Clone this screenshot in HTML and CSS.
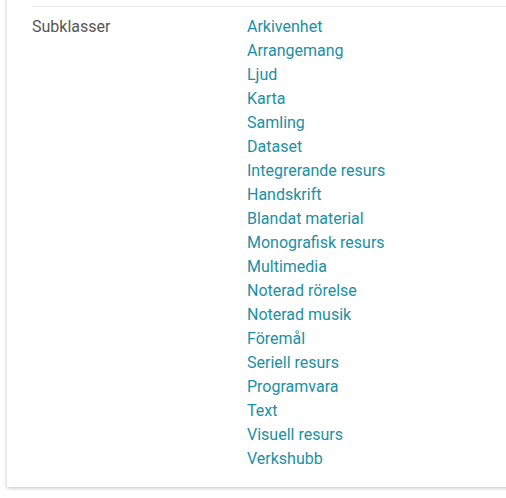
FILE: index.html
```html
<!DOCTYPE html>
<html>
<head>
<meta charset="utf-8">
<link rel="stylesheet" href="styles.css">
</head>
<body>
<div class="page">
<div class="card">
  <div class="row">
    <div class="label">Subklasser</div>
    <ul class="links">
      <li><a href="#">Arkivenhet</a></li>
      <li><a href="#">Arrangemang</a></li>
      <li><a href="#">Ljud</a></li>
      <li><a href="#">Karta</a></li>
      <li><a href="#">Samling</a></li>
      <li><a href="#">Dataset</a></li>
      <li><a href="#">Integrerande resurs</a></li>
      <li><a href="#">Handskrift</a></li>
      <li><a href="#">Blandat material</a></li>
      <li><a href="#">Monografisk resurs</a></li>
      <li><a href="#">Multimedia</a></li>
      <li><a href="#">Noterad rörelse</a></li>
      <li><a href="#">Noterad musik</a></li>
      <li><a href="#">Föremål</a></li>
      <li><a href="#">Seriell resurs</a></li>
      <li><a href="#">Programvara</a></li>
      <li><a href="#">Text</a></li>
      <li><a href="#">Visuell resurs</a></li>
      <li><a href="#">Verkshubb</a></li>
    </ul>
  </div>
</div>
</div>
</body>
</html>
```
FILE: styles.css
```css
html, body {
  margin: 0;
  padding: 0;
  background: #fff;
}
body {
  font-family: Roboto, "Liberation Sans", sans-serif;
  font-size: 16px;
  line-height: 24px;
}
.page {
  overflow: hidden;
  padding-bottom: 12px;
}
.card {
  margin: -20px -30px 0 7px;
  padding: 26px 0 16px 25px;
  background: #fff;
  box-shadow: 0 1px 4px rgba(0, 0, 0, 0.25);
}
.row {
  display: flex;
  border-top: 1px solid #e6e6e6;
  padding-top: 8px;
}
.label {
  width: 215px;
  flex: none;
  color: #555;
}
.links {
  list-style: none;
  margin: 0;
  padding: 0;
}
.links a {
  color: #1a8fa6;
  text-decoration: none;
}
```
